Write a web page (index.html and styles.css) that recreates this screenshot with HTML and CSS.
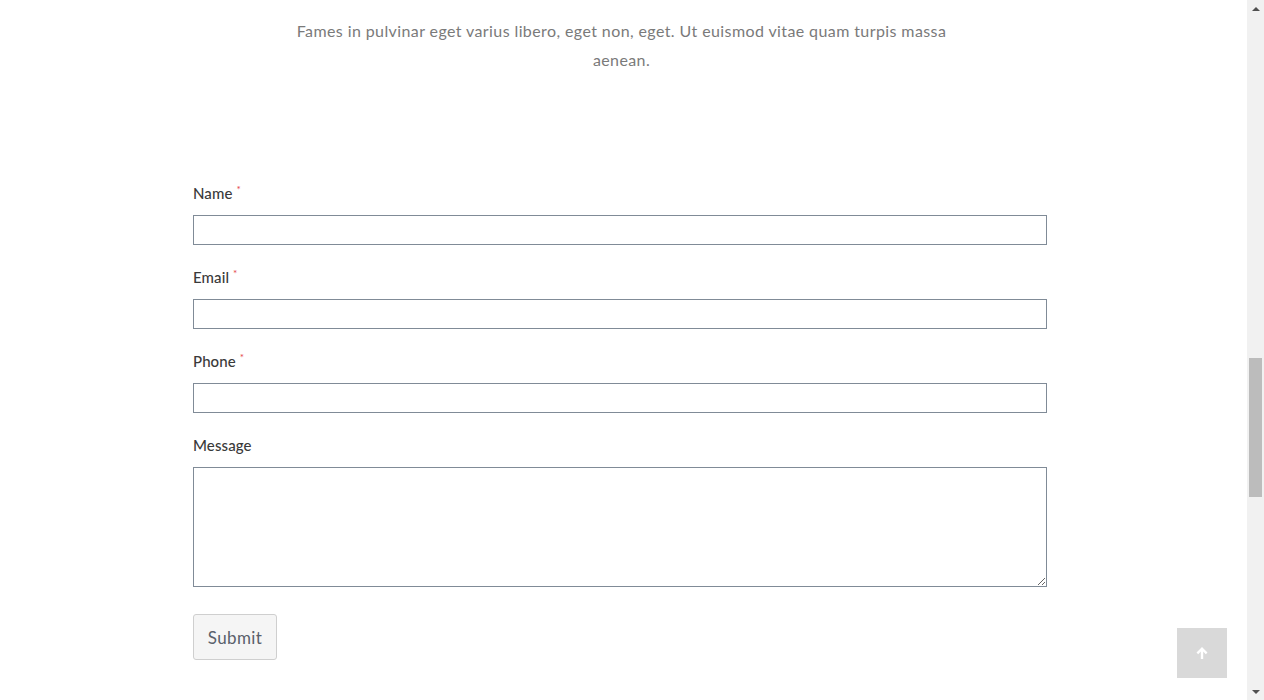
FILE: index.html
```html
<!DOCTYPE html>
<html>
<head>
<meta charset="utf-8">
<link rel="stylesheet" href="styles.css">
</head>
<body>
<div class="layout">
  <main class="page">
    <p class="intro">Fames in pulvinar eget varius libero, eget non, eget. Ut euismod vitae quam turpis massa aenean.</p>
    <form class="form">
      <div class="group">
        <label class="label">Name <span class="req">*</span></label>
        <input class="field" type="text">
      </div>
      <div class="group">
        <label class="label">Email <span class="req">*</span></label>
        <input class="field" type="text">
      </div>
      <div class="group">
        <label class="label">Phone <span class="req">*</span></label>
        <input class="field" type="text">
      </div>
      <div class="group last">
        <label class="label">Message</label>
        <textarea class="field area"></textarea>
      </div>
      <button class="submit" type="button">Submit</button>
    </form>
    <a class="to-top" href="#">
      <svg width="14" height="14" viewBox="0 0 14 14"><path d="M7 1 L12.5 6.5 L10.8 8.2 L8.2 5.6 L8.2 13 L5.8 13 L5.8 5.6 L3.2 8.2 L1.5 6.5 Z" fill="#fff"/></svg>
    </a>
  </main>
  <div class="scrollbar">
    <div class="arrow up"></div>
    <div class="track"><div class="thumb"></div></div>
    <div class="arrow down"></div>
  </div>
</div>
</body>
</html>
```
FILE: styles.css
```css
html, body {
  margin: 0;
  padding: 0;
  height: 700px;
  overflow: hidden;
  background: #fff;
}
body {
  font-family: Lato, "Open Sans", sans-serif;
}
.layout {
  display: flex;
  height: 700px;
}
.page {
  flex: 1;
  padding-top: 16px;
}
.intro {
  margin: 0 auto;
  max-width: 662px;
  text-align: center;
  font-size: 16px;
  line-height: 29px;
  letter-spacing: 0.4px;
  color: #7a7a7a;
  padding-right: 4px;
}
.form {
  width: 854px;
  margin: 108px auto 0;
  padding-right: 7px;
}
.group {
  margin-bottom: 21px;
}
.group.last {
  margin-bottom: 27px;
}
.label {
  display: block;
  font-size: 15px;
  line-height: 23px;
  height: 21px;
  color: #3a3a3a;
  font-weight: 500;
  letter-spacing: 0.1px;
  margin-bottom: 12px;
}
.req {
  color: #e5484d;
  font-size: 10px;
  vertical-align: top;
  line-height: 14px;
}
.field {
  display: block;
  box-sizing: border-box;
  width: 100%;
  height: 30px;
  margin: 0;
  border: 1px solid #808b97;
  border-radius: 0;
  background: #fff;
  padding: 4px 8px;
  font: inherit;
}
.area {
  height: 120px;
  resize: vertical;
}
.submit {
  display: block;
  margin: 0;
  width: 84px;
  height: 46px;
  background: #f5f5f5;
  border: 1px solid #cfcfcf;
  border-radius: 3px;
  font-family: inherit;
  font-size: 17px;
  font-weight: 400;
  letter-spacing: 0.4px;
  color: #5a606b;
  padding: 0;
}
.to-top {
  position: fixed;
  left: 1177px;
  top: 628px;
  width: 50px;
  height: 50px;
  background: #d9d9d9;
  display: flex;
  align-items: center;
  justify-content: center;
}
.scrollbar {
  width: 17px;
  background: #f1f1f1;
  display: flex;
  flex-direction: column;
}
.arrow {
  height: 17px;
  display: flex;
  align-items: center;
  justify-content: center;
}
.arrow.up::before {
  content: "";
  border-left: 4px solid transparent;
  border-right: 4px solid transparent;
  border-bottom: 4px solid #505050;
}
.arrow.down::before {
  content: "";
  border-left: 4px solid transparent;
  border-right: 4px solid transparent;
  border-top: 4px solid #505050;
}
.track {
  flex: 1;
  padding-top: 341px;
}
.thumb {
  margin: 0 2px;
  height: 139px;
  background: #bcbcbc;
}
```
